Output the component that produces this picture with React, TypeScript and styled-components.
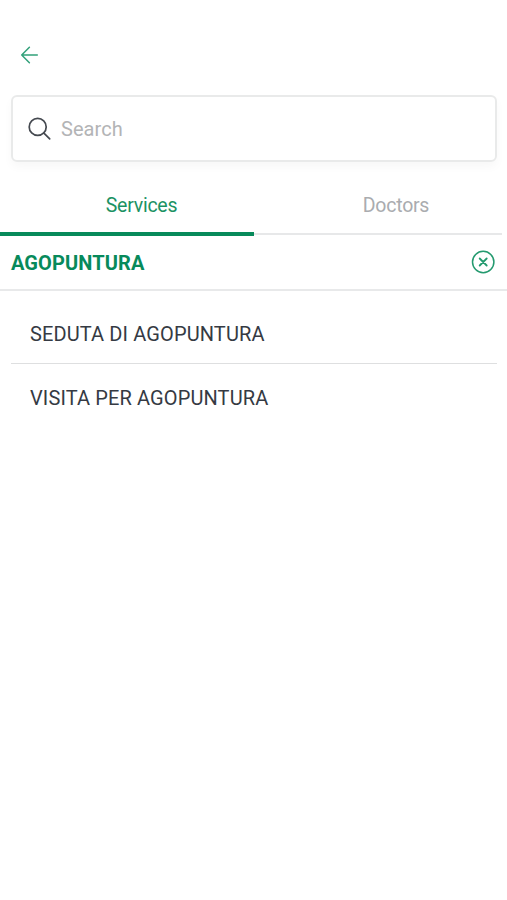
import React, { useState } from "react";
import styled, { createGlobalStyle } from "styled-components";

const green = "#078a5b";

const GlobalStyle = createGlobalStyle`
  * { box-sizing: border-box; }
  body { margin: 0; background: #fff; font-family: Roboto, sans-serif; }
  button { border: 0; padding: 0; background: none; font: inherit; cursor: pointer; }
`;

const Screen = styled.main`
  display: flex;
  flex-direction: column;
  width: 100%;
  height: 900px;
  overflow: hidden;
  background: #fff;
`;

const TopBar = styled.header`
  display: flex;
  height: 95px;
  padding: 45px 0 0 19px;
`;

const IconButton = styled.button<{ $size: number }>`
  display: flex;
  flex: none;
  align-items: center;
  justify-content: center;
  width: ${(p) => p.$size}px;
  height: ${(p) => p.$size}px;
`;

const SearchBox = styled.label`
  display: flex;
  align-items: center;
  height: 67px;
  margin: 0 10px 0 11px;
  padding-left: 15px;
  border: 2px solid #e9eaea;
  border-radius: 6px;
  box-shadow: 0 5px 10px rgba(0, 0, 0, 0.03);
`;

const SearchInput = styled.input`
  flex: 1;
  min-width: 0;
  height: 40px;
  margin-left: 9px;
  padding: 0;
  border: 0;
  outline: 0;
  background: transparent;
  font: 400 20px Roboto, sans-serif;
  letter-spacing: 0.05px;
  color: #30363f;
  &::placeholder { color: #b3b4b6; opacity: 1; }
`;

const Tabs = styled.nav`
  display: grid;
  grid-template-columns: 254px 248px;
  height: 74px;
`;

const Tab = styled.button<{ $active: boolean }>`
  display: flex;
  flex-direction: column;
  align-items: center;
  justify-content: space-between;
  height: 74px;
  color: ${(p) => (p.$active ? "#1b9263" : "#aaacaf")};
  &::after {
    content: "";
    width: 100%;
    height: ${(p) => (p.$active ? 4 : 2)}px;
    margin-bottom: ${(p) => (p.$active ? 0 : 1)}px;
    background: ${(p) => (p.$active ? green : "#e7e8e9")};
  }
`;

const TabLabel = styled.span<{ $shift: number }>`
  padding-top: 31px;
  padding-left: ${(p) => p.$shift}px;
  font-size: 19.5px;
  line-height: 25px;
  letter-spacing: -0.25px;
`;

const GroupHeader = styled.section`
  display: flex;
  align-items: center;
  justify-content: space-between;
  height: 55px;
  padding: 0 11px;
  border-bottom: 2px solid #e8e9ea;
`;

const GroupTitle = styled.h2`
  margin: 0;
  font-size: 20px;
  line-height: 24px;
  font-weight: 700;
  letter-spacing: 0.1px;
  color: ${green};
`;

const CloseIcon = styled.svg`
  margin-bottom: 1px;
`;

const ServiceList = styled.ul`
  margin: 0;
  padding: 13px 10px 0 11px;
  list-style: none;
`;

const ServiceRow = styled.li`
  display: flex;
  align-items: center;
  height: 59px;
  padding-left: 19px;
  font-size: 20px;
  letter-spacing: 0.12px;
  color: #353a43;
  & + & {
    height: 69px;
    border-top: 1px solid #dedfe0;
  }
`;

const services = ["SEDUTA DI AGOPUNTURA", "VISITA PER AGOPUNTURA"];

export default function App() {
  const [tab, setTab] = useState("services");
  return (
    <>
      <GlobalStyle />
      <Screen>
        <TopBar>
          <IconButton $size={20} aria-label="Back">
            <svg width="20" height="20" viewBox="0 0 20 20" fill="none" stroke="#32a17a" strokeWidth="1.5" strokeLinecap="round" strokeLinejoin="round">
              <path d="M18.3 10H2.7M10.4 2.2 2.7 10l7.7 7.7" />
            </svg>
          </IconButton>
        </TopBar>
        <SearchBox>
          <svg width="24" height="24" viewBox="0 0 24 24" fill="none" stroke="#454950" strokeWidth="1.7" strokeLinecap="round">
            <circle cx="9.7" cy="9.9" r="8.5" />
            <path d="m15.9 16.1 5.8 5.8" />
          </svg>
          <SearchInput placeholder="Search" />
        </SearchBox>
        <Tabs>
          <Tab $active={tab === "services"} onClick={() => setTab("services")}>
            <TabLabel $shift={29}>Services</TabLabel>
          </Tab>
          <Tab $active={tab === "doctors"} onClick={() => setTab("doctors")}>
            <TabLabel $shift={36}>Doctors</TabLabel>
          </Tab>
        </Tabs>
        <GroupHeader>
          <GroupTitle>AGOPUNTURA</GroupTitle>
          <IconButton $size={26} aria-label="Close group">
            <CloseIcon width="26" height="26" viewBox="0 0 26 26" fill="none" stroke="#249a6f" strokeWidth="1.5" strokeLinecap="round">
              <circle cx="13.2" cy="13" r="10.7" />
              <path d="m9.7 9.5 7 7m0-7-7 7" strokeWidth="1.8" />
            </CloseIcon>
          </IconButton>
        </GroupHeader>
        <ServiceList>
          {services.map((s) => (
            <ServiceRow key={s}>{s}</ServiceRow>
          ))}
        </ServiceList>
      </Screen>
    </>
  );
}
